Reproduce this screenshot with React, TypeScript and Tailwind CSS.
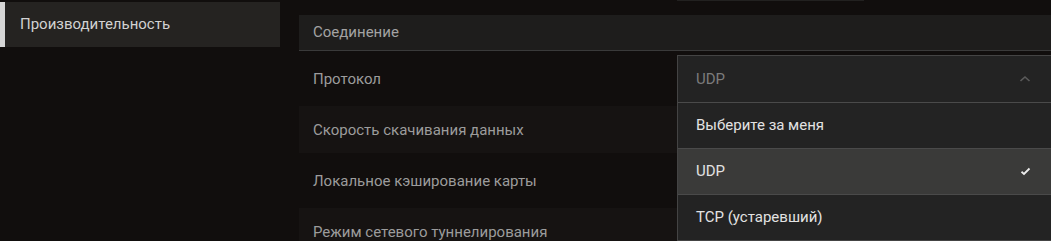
import React from "react";

const rows = [
  "Протокол",
  "Скорость скачивания данных",
  "Локальное кэширование карты",
  "Режим сетевого туннелирования",
];

const options = ["Выберите за меня", "UDP", "TCP (устаревший)"];

export default function App() {
  return (
    <div
      className="w-[1051px] h-[241px] overflow-hidden bg-[#110e0d] flex text-[15px]"
      style={{ fontFamily: "Roboto, 'Noto Sans', sans-serif" }}
    >
      {/* Sidebar */}
      <div className="w-[280px] shrink-0 pt-[2px]">
        <div className="h-[45px] flex bg-[#252321]">
          <div className="w-[5px] bg-[#d6d6d6]" />
          <div className="flex items-center pl-[15px] text-[#d2d2d2]">Производительность</div>
        </div>
      </div>

      {/* Settings panel */}
      <div className="flex-1 ml-[19px] pt-[15px] relative">
        {/* edge of the block above, scrolled out */}
        <div className="absolute top-0 left-[378px] w-[187px] h-px bg-[#222120]" />

        <div className="h-[36px] bg-[#1e1d1c] border-b border-[#3a3a3a] flex items-center pl-[14px] text-[#a3a3a3]">
          Соединение
        </div>
        <div className="flex flex-col gap-[4px] pt-[4px]">
          {rows.map((label, i) => (
            <div
              key={label}
              className={`h-[47px] shrink-0 flex items-center pl-[14px] pt-[1px] text-[#9c9c9c] ${i % 2 === 1 ? "bg-[#161312]" : ""}`}
            >
              {label}
            </div>
          ))}
        </div>

        {/* Select + open menu */}
        <div className="absolute left-[378px] right-0 top-[55px] bg-[#232323] border border-r-0 border-[#444444]">
          <div className="h-[46px] flex items-center justify-between pl-[18px] pr-[18px] text-[#7c7c7c]">
            <span>UDP</span>
            <svg width="12" height="8" viewBox="0 0 12 8" fill="none" className="mr-[2px]">
              <path d="M1.5 6L6 2L10.5 6" stroke="#5a5a5a" strokeWidth="1.6" />
            </svg>
          </div>
          {options.map((opt) => {
            const active = opt === "UDP";
            return (
              <div
                key={opt}
                className={`h-[46px] border-t border-[#4a4a4a] flex items-center justify-between pl-[18px] pr-[20px] text-[#e2e2e2] ${active ? "bg-[#3a3a39]" : "bg-[#232323]"}`}
              >
                <span>{opt}</span>
                {active && (
                  <svg width="11" height="9" viewBox="0 0 11 9" fill="none">
                    <path d="M1.5 4.8L4 7L9.5 1.5" stroke="#ececec" strokeWidth="1.8" />
                  </svg>
                )}
              </div>
            );
          })}
        </div>
      </div>
    </div>
  );
}
